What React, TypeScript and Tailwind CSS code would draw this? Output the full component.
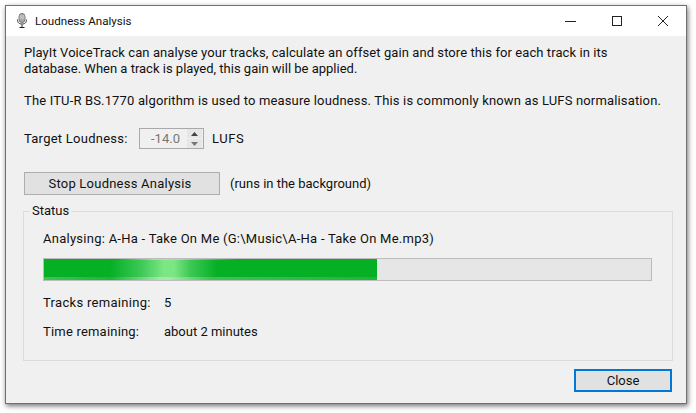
import React from "react";

function Mic() {
  return (
    <svg width="12" height="16" viewBox="0 0 12 16" className="shrink-0">
      <rect x="3" y="0.5" width="6" height="9" rx="3" fill="#a8a8a8" stroke="#777" />
      <path d="M3.5 3h5M3.5 5h5" stroke="#d8d8d8" />
      <path d="M1.500 6.500c0 3.500 2 4.500 4.500 4.500s4.500-1 4.500-4.500" fill="none" stroke="#333" />
      <path d="M6 11.500v3M3.500 14.500h5" stroke="#222" />
    </svg>
  );
}

export default function App() {
  return (
    <div className="w-[696px] h-[413px] bg-white pl-[5px] pt-[5px] text-[13px] leading-[16px] text-[#111] font-['Roboto','Noto_Sans',sans-serif] overflow-hidden">
      <div className="w-[682px] h-[399px] border border-[#707070] bg-[#f0f0f0] shadow-[1px_2px_5px_rgba(0,0,0,0.55)] flex flex-col">
        <div className="h-[30px] bg-white flex items-center shrink-0">
          <div className="ml-[10px] w-[19px]"><Mic /></div>
          <span className="text-[#111] text-[11.6px]">Loudness Analysis</span>
          <div className="ml-auto flex items-center">
            <svg width="46" height="30" viewBox="0 0 46 30"><path d="M17 15.500h11" stroke="#222" /></svg>
            <svg width="46" height="30" viewBox="0 0 46 30"><rect x="18.500" y="10.500" width="9" height="9" fill="none" stroke="#222" /></svg>
            <svg width="46" height="30" viewBox="0 0 46 30"><path d="M18 10l10 10M28 10l-10 10" stroke="#222" /></svg>
          </div>
        </div>
        <div className="flex-1 flex flex-col pl-[18px] pr-[13px] pt-[9px]">
          <p><span className="tracking-[0.08px]">PlayIt VoiceTrack can analyse your tracks, calculate an offset gain and store this for each track in its</span><br />database. When a track is played, this gain will be applied.</p>
          <p className="mt-[16px] tracking-[0.155px] whitespace-nowrap">The ITU-R BS.1770 algorithm is used to measure loudness. This is commonly known as LUFS normalisation.</p>
          <div className="flex items-center mt-[19px] h-[21px]">
            <span className="w-[115px] tracking-[0.25px]">Target Loudness:</span>
            <div className="w-[65px] h-[21px] border border-[#a9a9a9] flex items-center">
              <span className="flex-1 text-center text-[#777] pl-[4px]">-14.0</span>
              <div className="w-[15px] h-[19px] flex flex-col gap-px mr-[1px]">
                <div className="flex-1 bg-[#e6e6e6] flex items-center justify-center"><svg width="7" height="4"><path d="M3.500 0L7 4H0z" fill="#444" /></svg></div>
                <div className="flex-1 bg-[#e6e6e6] flex items-center justify-center"><svg width="7" height="4"><path d="M3.500 4L7 0H0z" fill="#777" /></svg></div>
              </div>
            </div>
            <span className="ml-[8px] tracking-[0.6px]">LUFS</span>
          </div>
          <div className="flex items-center mt-[23px]">
            <button className="w-[196px] h-[23px] bg-[#e1e1e1] border border-[#adadad] text-[#111] pt-[1px] pr-[4px] tracking-[0.23px]">Stop Loudness Analysis</button>
            <span className="ml-[10px] pt-[1px]">(runs in the background)</span>
          </div>
          <fieldset className="mt-[9px] w-[650px] h-[157px] border border-[#dcdcdc] ml-[-1px]">
            <legend className="ml-[6px] px-[2px] leading-[14px]">Status</legend>
            <div className="pl-[19px] pr-[20px]">
              <div className="mt-[13px] tracking-[0.26px] whitespace-nowrap">Analysing: A-Ha - Take On Me (G:\Music\A-Ha - Take On Me.mp3)</div>
              <div className="mt-[11px] h-[23px] w-[609px] border border-[#bcbcbc] bg-[#e6e6e6]">
                <div className="h-full w-[333px] flex flex-col">
                  <div className="h-[1px] bg-[linear-gradient(90deg,#06b025_0%,#06b025_22%,#9ae89f_33%,#9ae89f_40%,#06b025_58%,#06b025_100%)]" />
                  <div className="flex-1 bg-[linear-gradient(90deg,#06b025_0%,#06b025_20%,#3cc854_29%,#7ce685_36%,#7ce685_39%,#3cc854_44%,#06b025_52%,#06b025_100%)]" />
                  <div className="h-[3px] bg-[linear-gradient(90deg,#3cc455_0%,#1db63a_20%,#a0eba6_35%,#a0eba6_38%,#3cc455_50%,#1db63a_100%)]" />
                </div>
              </div>
              <div className="flex mt-[14px]"><span className="w-[121px] tracking-[0.3px]">Tracks remaining:</span><span>5</span></div>
              <div className="flex mt-[13px]"><span className="w-[121px] tracking-[0.2px]">Time remaining:</span><span>about 2 minutes</span></div>
            </div>
          </fieldset>
          <div className="flex justify-end mt-[8px] pr-[1px]">
            <button className="w-[98px] h-[23px] bg-[#e1e1e1] border-2 border-[#0078d7] text-[#111]">Close</button>
          </div>
        </div>
      </div>
    </div>
  );
}
